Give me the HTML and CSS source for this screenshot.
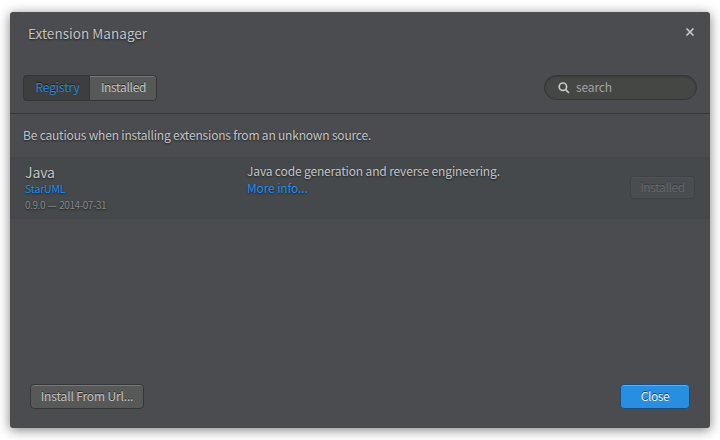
FILE: index.html
```
<!DOCTYPE html>
<html lang="en">
<head>
<meta charset="utf-8">
<title>Extension Manager</title>
<link rel="stylesheet" href="styles.css">
</head>
<body>
<main class="dialog">
  <header class="titlebar">
    <h1 class="title">Extension Manager</h1>
    <button class="dismiss" aria-label="Close dialog"><svg width="10" height="10" viewBox="0 0 10 10"><path d="M1.5 1.5L8.5 8.5M8.5 1.5L1.5 8.5"/></svg></button>
  </header>
  <div class="toolbar">
    <nav class="tabs">
      <button class="tab tab-active"><span>Registry</span></button>
      <button class="tab tab-raised"><span>Installed</span></button>
    </nav>
    <div class="search">
      <svg width="12" height="12" viewBox="0 0 12 12"><circle cx="4.9" cy="4.7" r="3.7"/><path d="M7.6 7.6L11 11"/></svg>
      <span>search</span>
    </div>
  </div>
  <p class="notice">Be cautious when installing extensions from an unknown source.</p>
  <section class="extension">
    <div class="identity">
      <h2 class="name">Java</h2>
      <a class="author">StarUML</a>
      <span class="version">0.9.0 — 2014-07-31</span>
    </div>
    <div class="description">
      <span>Java code generation and reverse engineering.</span>
      <a class="more">More info...</a>
    </div>
    <button class="button button-disabled">Installed</button>
  </section>
  <footer class="footer">
    <button class="button">Install From Url...</button>
    <button class="button button-primary">Close</button>
  </footer>
</main>
</body>
</html>
```
FILE: styles.css
```
* { box-sizing: border-box; }
body {
  margin: 0;
  width: 720px;
  height: 440px;
  padding: 12px 10px;
  background: #fff;
  overflow: hidden;
  font-family: "Noto Sans CJK SC", "Open Sans", sans-serif;
  font-size: 12px;
  line-height: 17px;
  letter-spacing: -.15px;
  color: #c3c4c5;
  text-shadow: 0 1px 2px rgba(0,0,0,.6);
}
h1, h2, p { margin: 0; font-weight: 400; }
button {
  margin: 0; padding: 0; border: 0; background: none;
  font: inherit; color: inherit; letter-spacing: inherit; text-shadow: inherit;
}
svg { display: block; fill: none; stroke: #c8c9ca; stroke-width: 1.7; }
span, a { white-space: nowrap; }
.dialog {
  height: 416px;
  display: flex;
  flex-direction: column;
  background: #4b4c4f;
  border-radius: 3px;
  box-shadow: 0 2px 12px rgba(0,0,0,.5);
}
.titlebar {
  height: 60px;
  padding: 11px 15px 0 18px;
  display: flex;
  justify-content: space-between;
  align-items: flex-start;
}
.title { font-size: 13.5px; line-height: 20px; letter-spacing: .04px; }
.dismiss { padding-top: 4px; }
.toolbar {
  height: 42px;
  padding: 3px 13px 0;
  display: flex;
  justify-content: space-between;
  align-items: flex-start;
  border-bottom: 1px solid #37383b;
}
.tabs { display: flex; height: 26px; }
.tab {
  height: 26px;
  width: 67px;
  padding-bottom: 3px;
  letter-spacing: -.32px;
  border: 1px solid #343637;
  text-shadow: 0 -1px 0 rgba(0,0,0,.55);
}
.tab-active {
  width: 66px;
  padding-left: 2px;
  letter-spacing: -.15px;
  color: #2787d8;
  background: #3d3e40;
  border-right: 0;
  border-radius: 4px 0 0 4px;
}
.tab-raised { width: 68px; padding-left: 1px; background: #575958; border-radius: 0 4px 4px 0; box-shadow: inset 0 1px 0 #777978; }
.search {
  width: 153px;
  height: 25px;
  padding-left: 13px;
  display: flex;
  align-items: center;
  gap: 6px;
  border: 1px solid #343635;
  border-radius: 13px;
  background: #454744;
  box-shadow: inset 0 1px 2px rgba(0,0,0,.18);
  color: #a2a3a3;
  text-shadow: none;
}
.search span { padding-bottom: 2px; }
.notice { height: 43px; padding: 12px 13px 0; letter-spacing: -.19px; }
.extension {
  height: 62px;
  padding: 5px 15px 0 15px;
  display: flex;
  background: #45494b;
}
.identity { width: 222px; padding-top: 1px; display: flex; flex-direction: column; }
.name { font-size: 14px; line-height: 19px; letter-spacing: -.1px; }
.author, .more { color: #1d8ff2; }
.author { font-size: 10.5px; line-height: 14px; }
.version { font-size: 10px; line-height: 17px; letter-spacing: -.43px; word-spacing: 1px; color: #858788; }
.description { flex: 1; display: flex; flex-direction: column; }
.button {
  height: 25px;
  padding: 0 0 2px;
  background: #575958;
  border: 1px solid #343637;
  border-radius: 4px;
  box-shadow: inset 0 1px 0 #777978;
  text-shadow: 0 -1px 0 rgba(0,0,0,.55);
}
.button-disabled {
  width: 65px;
  height: 23px;
  margin-top: 14px;
  letter-spacing: -.4px;
  background: #494d4f;
  border-color: #3e4244;
  box-shadow: inset 0 1px 0 #505456;
  color: #64686a;
  text-shadow: 0 -1px 0 rgba(0,0,0,.25);
}
.footer {
  margin-top: auto;
  padding: 0 20px 19px;
  display: flex;
  justify-content: space-between;
}
.footer .button { width: 114px; }
.footer .button-primary {
  width: 70px;
  background: #288edf;
  border-color: #174f80;
  box-shadow: inset 0 1px 0 #65b0eb;
  color: #e3edf5;
  letter-spacing: -.4px;
}
```
